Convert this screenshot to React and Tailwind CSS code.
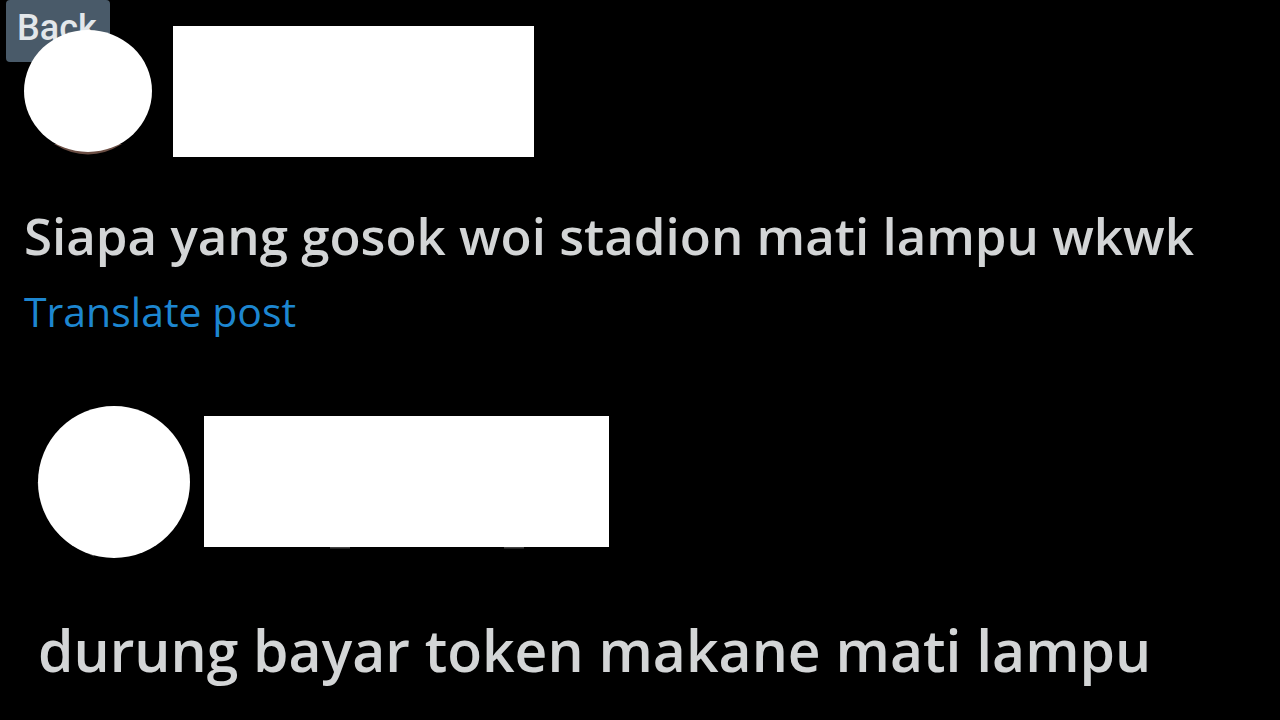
function Tooltip({ children }) {
  return (
    <button
      type="button"
      className="absolute left-[6px] top-0 h-[62px] w-26 rounded-sm bg-[#495a69] pb-[6px] pl-[11px] text-left font-['Roboto',sans-serif] text-4xl font-medium text-[#e3e7ea]"
    >
      {children}
    </button>
  );
}

export default function App() {
  return (
    <main className="relative min-h-screen overflow-hidden bg-black font-['Open_Sans',sans-serif] text-[#d3d5d6]">
      <Tooltip>Back</Tooltip>
      <article className="px-6 pt-[26px]">
        <header className="flex items-start gap-[21px]">
          <svg viewBox="0 0 128 131" className="relative h-[131px] w-32 shrink-0" aria-hidden="true">
            <path d="M30 118Q64 139 98 118Z" fill="#6b4e44" />
            <ellipse cx="64" cy="65" rx="64" ry="61" fill="#fff" />
          </svg>
          <div className="h-[131px] w-[361px] bg-white" />
        </header>
        <p className="mt-[42px] whitespace-nowrap text-[51px] font-semibold leading-[72px]">
          Siapa yang gosok woi stadion mati lampu wkwk
        </p>
        <a href="#translate" className="mt-3 block w-fit text-[41px] leading-[56px] text-[#1d86d0]">
          Translate post
        </a>
      </article>
      <article className="mt-[67px] px-[38px]">
        <header className="flex items-center gap-[14px]">
          <svg viewBox="0 0 152 152" className="h-[152px] w-[152px] shrink-0 overflow-visible" aria-hidden="true">
            <path d="M0 76Q2 129 56 150" fill="none" stroke="#444" strokeWidth="1" />
            <circle cx="76" cy="76" r="76" fill="#fff" />
          </svg>
          <svg viewBox="0 0 405 134" className="h-[134px] w-[405px]" aria-hidden="true">
            <path d="M126 132h20M300 132h20" stroke="#444" strokeWidth="3" />
            <rect y="1" width="405" height="131" fill="#fff" />
          </svg>
        </header>
        <p className="mt-[54px] whitespace-nowrap text-[57px] font-semibold leading-[76px]">
          durung bayar token makane mati lampu
        </p>
      </article>
    </main>
  );
}
